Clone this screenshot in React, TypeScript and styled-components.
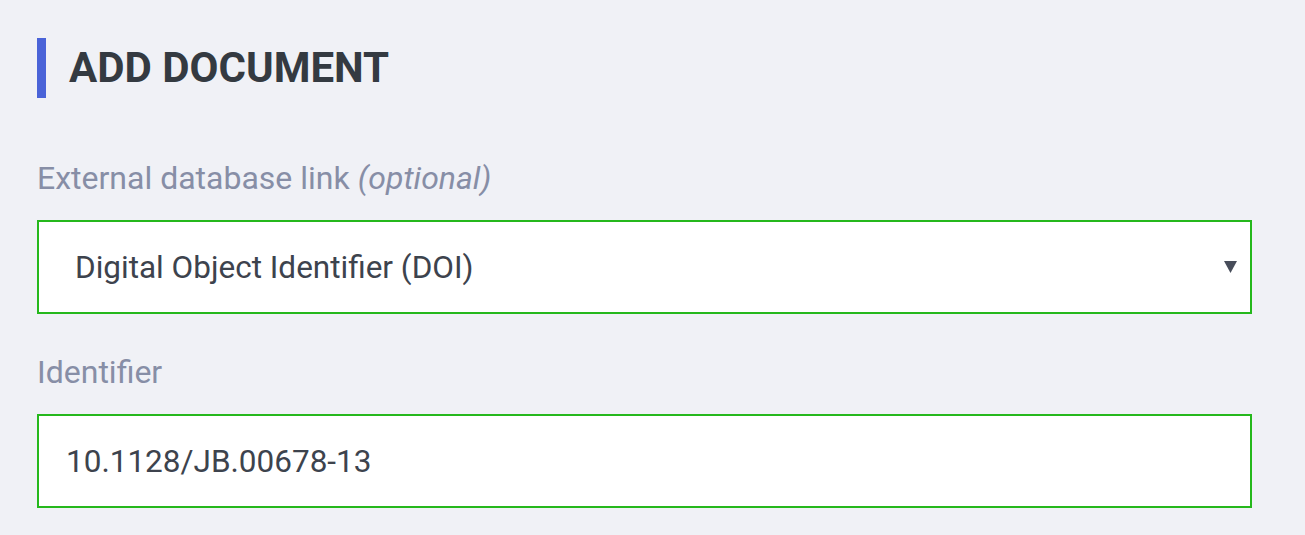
import React from "react";
import styled, { createGlobalStyle } from "styled-components";

const GlobalStyle = createGlobalStyle`
  html, body {
    margin: 0;
    padding: 0;
    background: #f0f1f6;
    font-family: Roboto, "Liberation Sans", sans-serif;
  }
`;

const Page = styled.main`
  display: flex;
  flex-direction: column;
  padding: 38px 53px 0 37px;
  min-height: 535px;
  box-sizing: border-box;
`;

const Heading = styled.h1`
  margin: 0;
  border-left: 9px solid #4a63d8;
  padding-left: 23px;
  height: 60px;
  line-height: 60px;
  font-size: 42px;
  font-weight: 700;
  color: #343a41;
`;

const Field = styled.div<{ $top: number }>`
  display: flex;
  flex-direction: column;
  gap: 24px;
  margin-top: ${(p) => p.$top}px;
`;

const Label = styled.label`
  font-size: 32px;
  line-height: 36px;
  color: #878ea6;

  em {
    font-style: italic;
  }
`;

const SelectWrap = styled.div`
  position: relative;
  display: flex;
`;

const Select = styled.select`
  appearance: none;
  -webkit-appearance: none;
  flex: 1;
  height: 94px;
  box-sizing: border-box;
  border: 2px solid #25b81c;
  border-radius: 0;
  background: #fff;
  padding: 0 60px 0 36px;
  font-family: Roboto, "Liberation Sans", sans-serif;
  font-size: 31.5px;
  color: #3d434d;
  outline: none;
`;

const Arrow = styled.svg`
  position: absolute;
  right: 15px;
  top: 41px;
  width: 13px;
  height: 12px;
  pointer-events: none;
`;

const Input = styled.input`
  height: 94px;
  box-sizing: border-box;
  border: 2px solid #25b81c;
  border-radius: 0;
  background: #fff;
  padding: 0 27px;
  font-family: Roboto, "Liberation Sans", sans-serif;
  font-size: 31.5px;
  color: #3d434d;
  outline: none;
`;

export default function App() {
  return (
    <>
      <GlobalStyle />
      <Page>
        <Heading>ADD DOCUMENT</Heading>
        <Field $top={62}>
          <Label>
            External database link <em>(optional)</em>
          </Label>
          <SelectWrap>
            <Select defaultValue="doi">
              <option value="doi">Digital Object Identifier (DOI)</option>
              <option value="pmid">PubMed ID</option>
            </Select>
            <Arrow viewBox="0 0 13 12">
              <path d="M0 0h13L6.5 12z" fill="#474d5a" />
            </Arrow>
          </SelectWrap>
        </Field>
        <Field $top={40}>
          <Label>Identifier</Label>
          <Input defaultValue="10.1128/JB.00678-13" />
        </Field>
      </Page>
    </>
  );
}
